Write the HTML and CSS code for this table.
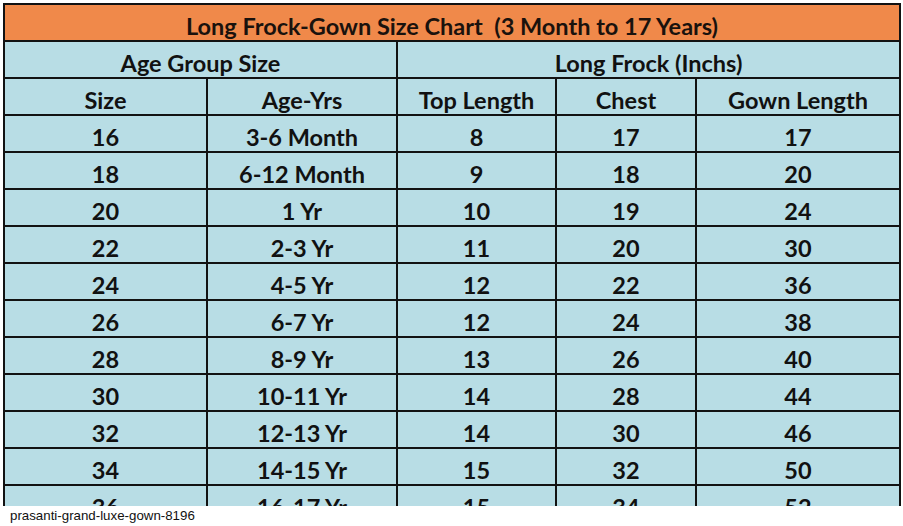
FILE: index.html
```html
<!DOCTYPE html>
<html>
<head>
<meta charset="utf-8">
<link rel="stylesheet" href="styles.css">
</head>
<body>
<div class="frame">
  <div class="chart">
    <div class="cell title">Long Frock-Gown Size Chart&nbsp; (3 Month to 17 Years)</div>
    <div class="cell span2">Age Group Size</div>
    <div class="cell span3">Long Frock (Inchs)</div>
    <div class="cell">Size</div>
    <div class="cell">Age-Yrs</div>
    <div class="cell">Top Length</div>
    <div class="cell">Chest</div>
    <div class="cell">Gown Length</div>

    <div class="cell">16</div><div class="cell">3-6 Month</div><div class="cell">8</div><div class="cell">17</div><div class="cell">17</div>
    <div class="cell">18</div><div class="cell">6-12 Month</div><div class="cell">9</div><div class="cell">18</div><div class="cell">20</div>
    <div class="cell">20</div><div class="cell">1 Yr</div><div class="cell">10</div><div class="cell">19</div><div class="cell">24</div>
    <div class="cell">22</div><div class="cell">2-3 Yr</div><div class="cell">11</div><div class="cell">20</div><div class="cell">30</div>
    <div class="cell">24</div><div class="cell">4-5 Yr</div><div class="cell">12</div><div class="cell">22</div><div class="cell">36</div>
    <div class="cell">26</div><div class="cell">6-7 Yr</div><div class="cell">12</div><div class="cell">24</div><div class="cell">38</div>
    <div class="cell">28</div><div class="cell">8-9 Yr</div><div class="cell">13</div><div class="cell">26</div><div class="cell">40</div>
    <div class="cell">30</div><div class="cell">10-11 Yr</div><div class="cell">14</div><div class="cell">28</div><div class="cell">44</div>
    <div class="cell">32</div><div class="cell">12-13 Yr</div><div class="cell">14</div><div class="cell">30</div><div class="cell">46</div>
    <div class="cell">34</div><div class="cell">14-15 Yr</div><div class="cell">15</div><div class="cell">32</div><div class="cell">50</div>
    <div class="cell">36</div><div class="cell">16-17 Yr</div><div class="cell">15</div><div class="cell">34</div><div class="cell">52</div>
  </div>
</div>
<div class="caption">prasanti-grand-luxe-gown-8196</div>
</body>
</html>
```
FILE: styles.css
```css
html, body {
  margin: 0;
  padding: 0;
  background: #ffffff;
}

.frame {
  height: 506px;
  overflow: hidden;
  padding: 3px 0 0 3px;
  box-sizing: border-box;
}

.chart {
  display: grid;
  grid-template-columns: 201px 188px 157px 138px 202px;
  grid-auto-rows: 35px;
  gap: 2px;
  padding: 2px;
  width: 898px;
  box-sizing: border-box;
  background: #121212;
}

.cell {
  background: #b8dde5;
  display: flex;
  align-items: flex-end;
  justify-content: center;
  font-family: Lato, "Liberation Sans", sans-serif;
  font-weight: 700;
  font-size: 23.5px;
  line-height: 22px;
  padding-bottom: 3px;
  box-sizing: border-box;
  color: #111111;
  white-space: nowrap;
}

.title {
  grid-column: span 5;
  background: #f0894a;
  color: #1a120d;
}

.span2 {
  grid-column: span 2;
}

.span3 {
  grid-column: span 3;
}

.caption {
  height: 20px;
  padding-left: 10px;
  font-family: "Liberation Sans", Arial, sans-serif;
  font-size: 13.3px;
  line-height: 20px;
  color: #111111;
}
```
